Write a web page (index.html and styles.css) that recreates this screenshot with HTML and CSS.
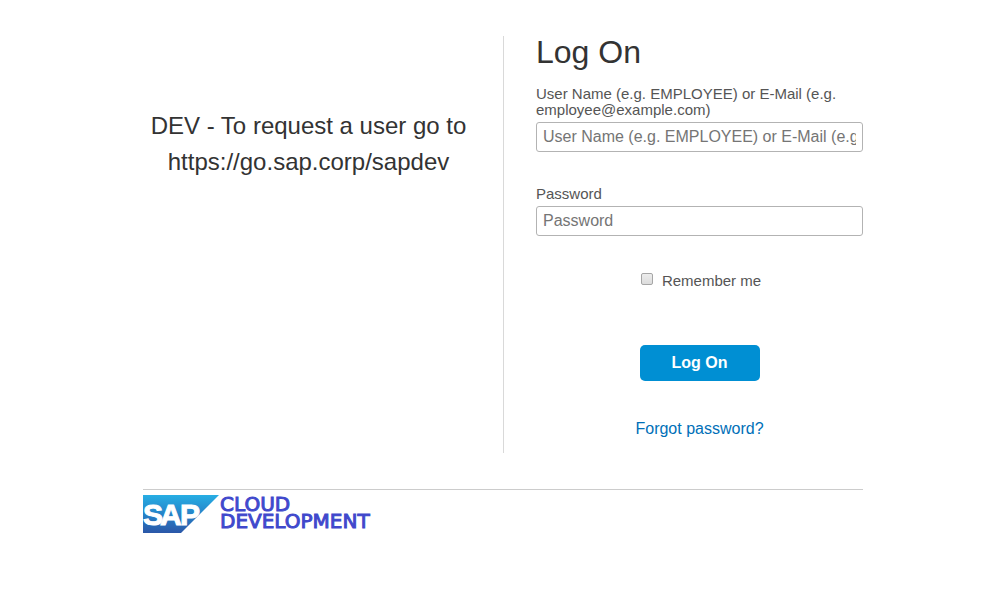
FILE: index.html
```
<!DOCTYPE html>
<html lang="en">
<head>
<meta charset="utf-8">
<meta name="viewport" content="width=device-width, initial-scale=1">
<title>Log On</title>
<link rel="stylesheet" href="styles.css">
</head>
<body>
<div class="page">
  <main class="panels">
    <section class="notice">
      <p class="notice-text">DEV - To request a user go to https://go.sap.corp/sapdev</p>
    </section>
    <form class="logon">
      <h1 class="title">Log On</h1>
      <div class="field">
        <label class="label" for="user">User Name (e.g. EMPLOYEE) or E-Mail (e.g. employee@example.com)</label>
        <input class="input" id="user" type="text" placeholder="User Name (e.g. EMPLOYEE) or E-Mail (e.g. employee@example.com)">
      </div>
      <div class="field">
        <label class="label" for="password">Password</label>
        <input class="input" id="password" type="password" placeholder="Password">
      </div>
      <div class="remember">
        <input class="checkbox" id="remember" type="checkbox">
        <label class="remember-label" for="remember">Remember me</label>
      </div>
      <button class="button" type="submit">Log On</button>
      <a class="forgot" href="#">Forgot password?</a>
    </form>
  </main>
  <footer class="footer">
    <svg class="logo" width="76" height="38" viewBox="0 0 76 38" role="img" aria-label="SAP">
      <defs>
        <linearGradient id="blue" x1="0" y1="0" x2="0" y2="1">
          <stop offset="0" stop-color="#27aee4"/>
          <stop offset="0.5" stop-color="#2583c8"/>
          <stop offset="1" stop-color="#2b57a8"/>
        </linearGradient>
      </defs>
      <path d="M0 0H76L38 38H0Z" fill="url(#blue)"/>
      <text class="logo-text" x="0 17 37" y="30">SAP</text>
    </svg>
    <div class="brand">
      <div>CLOUD</div>
      <div>DEVELOPMENT</div>
    </div>
  </footer>
</div>
</body>
</html>
```
FILE: styles.css
```
* {
  box-sizing: border-box;
}

body {
  margin: 0;
  background: #fff;
  color: #333;
  font-family: "Liberation Sans", Arial, sans-serif;
  font-size: 16px;
}

.page {
  max-width: 720px;
  margin: 0 auto;
  padding-top: 36px;
}

.panels {
  display: grid;
  grid-template-columns: 361fr 359fr;
}

.notice {
  padding: 72px 29px 0 0;
  border-right: 1px solid #d9d9d9;
}

.notice-text {
  margin: 0;
  font-size: 24px;
  line-height: 36px;
  text-align: center;
}

.logon {
  display: flex;
  flex-direction: column;
  padding: 0 0 14px 32px;
}

.title {
  margin: 0 0 18px;
  font-size: 32px;
  font-weight: 400;
  line-height: 32px;
}

.field {
  display: flex;
  flex-direction: column;
  gap: 4px;
  margin-bottom: 34px;
}

.label,
.remember-label {
  color: #555;
  font-size: 15px;
  line-height: 16px;
}

.input {
  width: 100%;
  height: 30px;
  padding: 0 6px;
  border: 1px solid #b3b3b3;
  border-radius: 3px;
  background: #fff;
  color: #333;
  font: inherit;
}

.input::placeholder {
  color: #757575;
}

.remember {
  display: flex;
  justify-content: center;
  gap: 9px;
  margin: 3px 0 56px;
  padding-left: 3px;
}

.checkbox {
  appearance: none;
  width: 12px;
  height: 12px;
  margin: 0;
  border: 1px solid #a6a6a6;
  border-radius: 2px;
  background: linear-gradient(#ededed, #dcdcdc);
}

.checkbox:checked {
  background: #008fd3;
}

.button {
  align-self: center;
  width: 120px;
  height: 36px;
  padding: 0;
  border: 0;
  border-radius: 5px;
  background: #008fd3;
  color: #fff;
  font: inherit;
  font-weight: 700;
  cursor: pointer;
}

.forgot {
  align-self: center;
  margin-top: 38px;
  color: #0070b8;
  line-height: 20px;
  text-decoration: none;
}

.footer {
  display: flex;
  gap: 1px;
  margin-top: 36px;
  padding-top: 5px;
  border-top: 1px solid #ccc;
}

.logo-text {
  fill: #fff;
  stroke: #fff;
  stroke-width: 1px;
  font-family: "Liberation Sans", Arial, sans-serif;
  font-size: 30px;
  font-weight: 700;
}

.brand {
  padding-top: 1px;
  color: #4048cc;
  font-family: "DejaVu Sans", sans-serif;
  font-size: 20px;
  line-height: 17px;
  -webkit-text-stroke: 1px #4048cc;
}
```
